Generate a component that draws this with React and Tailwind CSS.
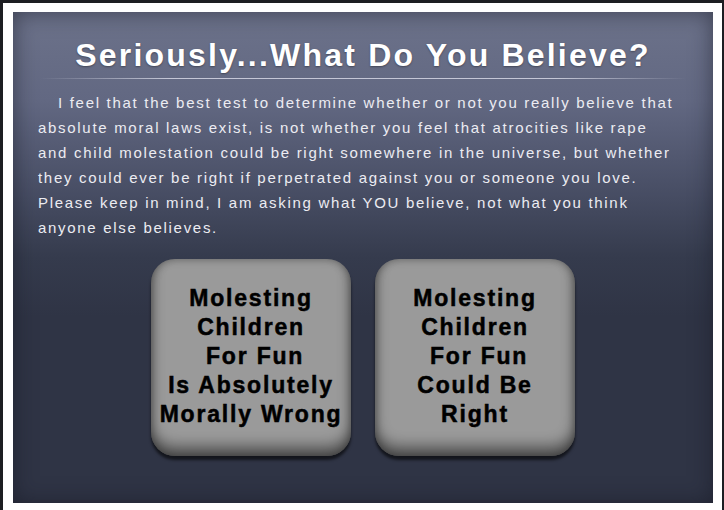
import React from "react";

const choices = [
  ["Molesting", "Children", "\u00a0For Fun", "Is Absolutely", "Morally Wrong"],
  ["Molesting", "Children", "\u00a0For Fun", "Could Be", "Right"],
];

const ChoiceButton = ({ lines }) => (
  <button className="w-[200px] h-[197px] rounded-[24px] bg-[#9a9a9a] shadow-[inset_0_-10px_14px_rgba(0,0,0,0.45),inset_0_0_8px_rgba(0,0,0,0.35),0_4px_3px_rgba(0,0,0,0.6)] flex flex-col items-center pt-[25px] text-black font-bold text-[23px] leading-[29px] tracking-[1.8px] [-webkit-text-stroke:0.5px_black] font-['Liberation_Sans',Arial,sans-serif]">
    {lines.map((line, i) => (
      <span key={i} className="whitespace-pre">{line}</span>
    ))}
  </button>
);

export default function App() {
  return (
    <div className="h-[510px] w-[724px] bg-[#1d1e22] pt-[3px] pl-[3px] overflow-hidden">
      <div className="w-[719px] h-[507px] bg-white pt-[9px] pl-[10px]">
        <div className="w-[700px] h-[491px] bg-[#2f3445] bg-[linear-gradient(180deg,#6c728a_0%,#626882_18%,#4a5067_35%,#353b4d_50%,#2f3445_62%)] shadow-[inset_0_0_22px_rgba(20,22,32,0.55)] px-[25px] pt-[25px] font-['Liberation_Sans',Arial,sans-serif]">
          <h1 className="text-center text-white font-bold text-[32px] leading-[36px] tracking-[2.2px] [text-shadow:0_1px_2px_rgba(0,0,0,0.35)]">
            Seriously...What Do You Believe?
          </h1>
          <div className="mt-[5px] h-px mx-[2px] bg-[linear-gradient(90deg,transparent,rgba(220,222,235,0.8)_20%,rgba(220,222,235,0.8)_80%,transparent)]" />
          <p className="mt-[11px] mr-[9px] text-[#ececf2] text-[15px] leading-[25px] tracking-[1.7px] indent-[20px]">
            I feel that the best test to determine whether or not you really believe that absolute moral laws exist, is not whether you feel that atrocities like rape and child molestation could be right somewhere in the universe, but whether they could ever be right if perpetrated against you or someone you love. Please keep in mind, I am asking what YOU believe, not what you think anyone else believes.
          </p>
          <div className="mt-[19px] flex justify-center gap-[24px]">
            {choices.map((lines, i) => (
              <ChoiceButton key={i} lines={lines} />
            ))}
          </div>
        </div>
      </div>
    </div>
  );
}
